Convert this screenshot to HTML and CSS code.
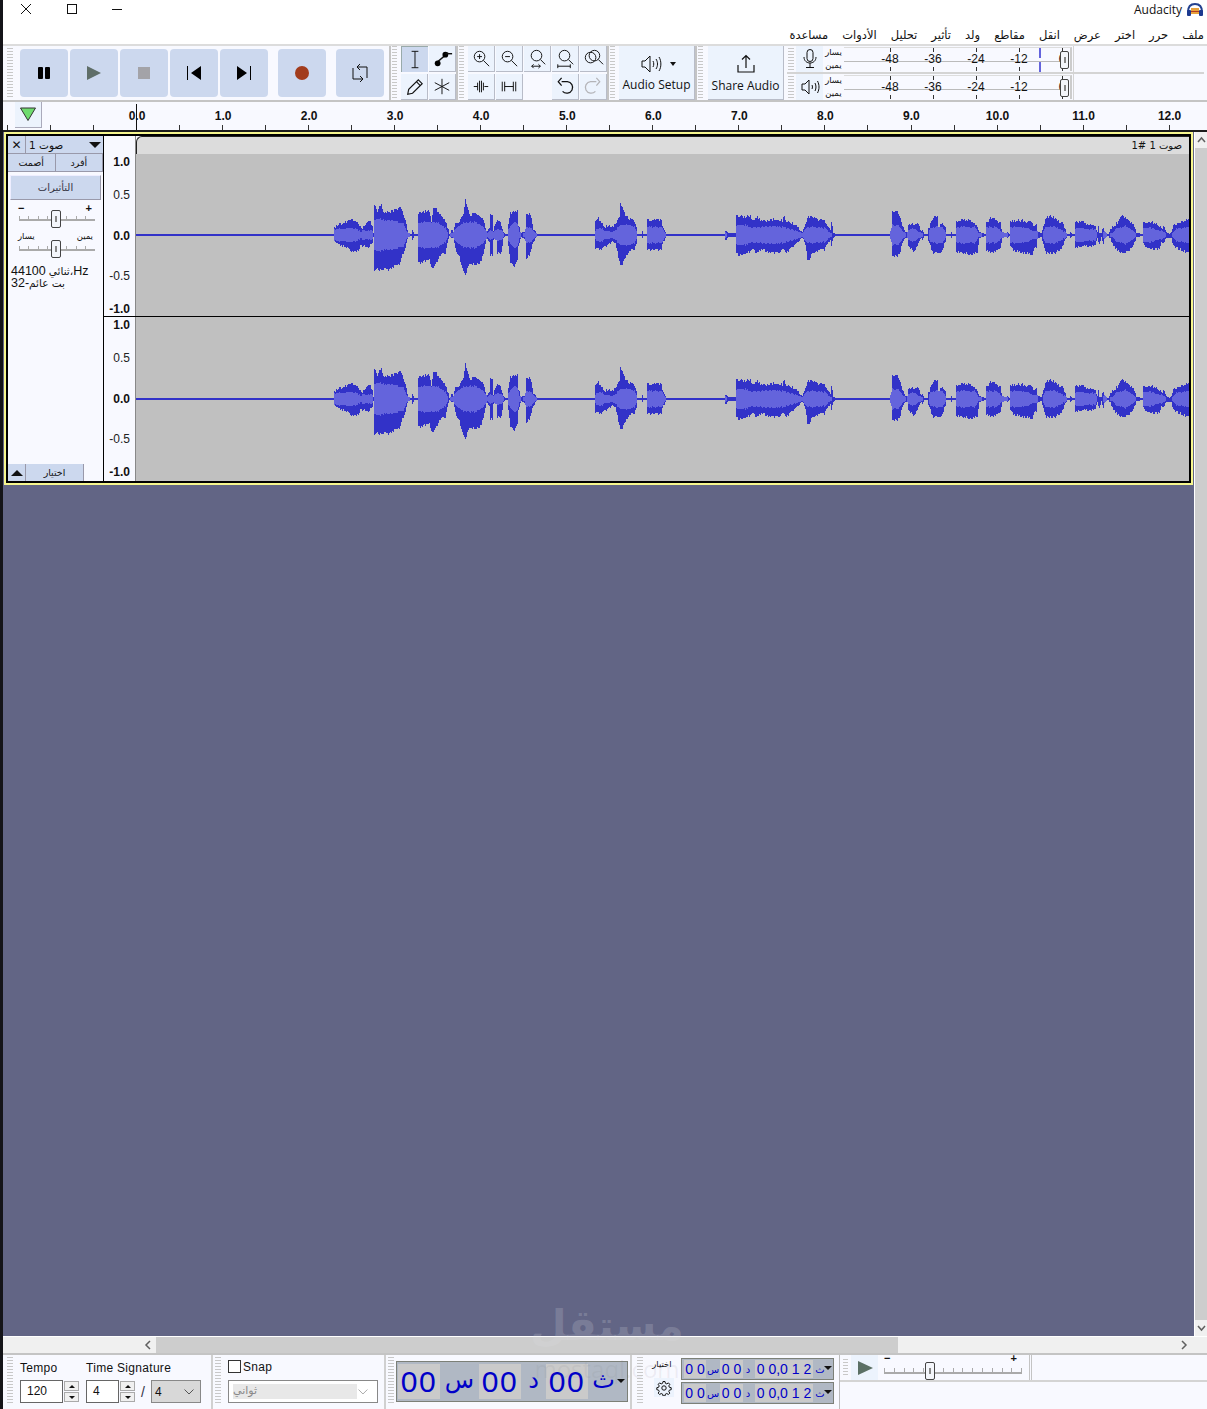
FILE: index.html
```html
<!DOCTYPE html>
<html lang="ar">
<head>
    <meta charset="UTF-8">
    <title>Audacity</title>
    <link rel="stylesheet" href="styles.css">
</head>
<body>
    <header class="titlebar">
        <div class="window-btns">
            <svg width="12" height="12" viewBox="0 0 12 12"><path d="M1 1l10 10M11 1L1 11" stroke="#111" fill="none"/></svg>
            <svg width="12" height="12" viewBox="0 0 12 12"><rect x="1.500" y="1.500" width="9" height="9" stroke="#111" fill="none"/></svg>
            <svg width="12" height="12" viewBox="0 0 12 12"><path d="M1 6.500h10" stroke="#111" fill="none"/></svg>
        </div>
        <div class="app-name">
            Audacity
            <svg width="16" height="14" viewBox="0 0 16 14">
                <path d="M1 9C1 3 4 1 8 1s7 2 7 8" stroke="#23418f" stroke-width="2" fill="none"/>
                <rect x="0" y="7" width="4" height="6" rx="1" fill="#1c3a90"/>
                <rect x="12" y="7" width="4" height="6" rx="1" fill="#1c3a90"/>
                <rect x="4" y="5" width="8" height="6" fill="#e8a23c"/>
                <path d="M4 8.500h8" stroke="#b03a20"/>
            </svg>
        </div>
    </header>
    <nav class="menubar">
        <span>ملف</span><span>حرر</span><span>اختر</span><span>عرض</span><span>انقل</span><span>مقاطع</span><span>ولد</span><span>تأثير</span><span>تحليل</span><span>الأدوات</span><span>مساعدة</span>
    </nav>

    <section class="toolbars">
        <div class="transport">
            <div class="grip"></div>
            <button class="tbtn">
                <svg viewBox="0 0 48 48"><rect x="18" y="18" width="5" height="12" rx="1"/><rect x="25" y="18" width="5" height="12" rx="1"/></svg>
            </button>
            <button class="tbtn">
                <svg viewBox="0 0 48 48"><path d="M17 17l14 7-14 7z" fill="#5f6e68"/></svg>
            </button>
            <button class="tbtn">
                <svg viewBox="0 0 48 48"><rect x="18" y="18" width="12" height="12" fill="#a3a3a8"/></svg>
            </button>
            <button class="tbtn">
                <svg viewBox="0 0 48 48"><path d="M17 17h1v14h-1zM31 17v14l-10-7z"/></svg>
            </button>
            <button class="tbtn">
                <svg viewBox="0 0 48 48"><path d="M17 17l10 7-10 7zM30 17h1v14h-1z"/></svg>
            </button>
            <button class="tbtn tbtn-gap">
                <svg viewBox="0 0 48 48"><circle cx="24" cy="24" r="7" fill="#a23c1c"/></svg>
            </button>
            <button class="tbtn tbtn-gap">
                <svg viewBox="0 0 48 48"><path d="M21 18h10v11M27 30H17V19" fill="none" stroke="#111"/><path d="M24 15l-3 3 3 3M24 27l3 3-3 3" fill="none" stroke="#111"/></svg>
            </button>
        </div>

        <div class="sep"></div>
        <div class="toolgrid tools">
            <button class="sbtn active"><svg viewBox="0 0 27 26"><path d="M10 4.500h7M10 21.500h7M13.500 4.500v17" stroke="#111" fill="none"/></svg></button>
            <button class="sbtn"><svg viewBox="0 0 27 26"><path d="M7 18L20 7" stroke="#111" stroke-width="1.500"/><circle cx="9" cy="18" r="3"/><circle cx="17" cy="9" r="3"/><path d="M17 8h7" stroke="#111" stroke-width="1.500"/></svg></button>
            <button class="sbtn"><svg viewBox="0 0 27 26"><path d="M7 21l1-5L18 6l4 4-10 10zM16 8l4 4" fill="none" stroke="#111" stroke-width="1.200"/></svg></button>
            <button class="sbtn"><svg viewBox="0 0 27 26"><path d="M13.500 5v16M6 9l15 8M21 9L6 17" stroke="#111" fill="none"/></svg></button>
        </div>

        <div class="sep"></div>
        <div class="toolgrid edit">
            <button class="sbtn"><svg viewBox="0 0 27 26"><circle cx="12" cy="11" r="5.500" class="ln"/><path d="M16 15l6 6M9.500 11h5M12 8.500v5" class="ln"/></svg></button>
            <button class="sbtn"><svg viewBox="0 0 27 26"><circle cx="12" cy="11" r="5.500" class="ln"/><path d="M16 15l6 6M9.500 11h5" class="ln"/></svg></button>
            <button class="sbtn"><svg viewBox="0 0 27 26"><circle cx="13" cy="10" r="5.500" class="ln"/><path d="M17 14l5 5M8 21h9M10 19l-2 2 2 2M15 19l2 2-2 2" class="ln"/></svg></button>
            <button class="sbtn"><svg viewBox="0 0 27 26"><circle cx="13" cy="10" r="5.500" class="ln"/><path d="M17 14l5 5M6 21h13M6 19v4M19 19v4" class="ln"/></svg></button>
            <button class="sbtn"><svg viewBox="0 0 27 26"><circle cx="11" cy="12" r="5.500" class="ln"/><circle cx="15" cy="10" r="5.500" class="ln"/><path d="M19 14l5 5" class="ln"/></svg></button>
            <button class="sbtn"><svg viewBox="0 0 27 26"><path d="M6 13h4M21 13h-4M10 9v8M12 7v12M14 7v12M16 9v8" class="ln"/></svg></button>
            <button class="sbtn"><svg viewBox="0 0 27 26"><path d="M9 13h9M6.500 8v10M9 8v10M18 8v10M20.500 8v10" class="ln"/></svg></button>
            <div class="sblank"></div>
            <button class="sbtn"><svg viewBox="0 0 27 26"><path d="M10 8h6a6 6 0 1 1-5 10M10 4L6.500 8 10 12" class="ln" stroke-width="1.300"/></svg></button>
            <button class="sbtn"><svg viewBox="0 0 27 26"><path d="M17 8h-6a6 6 0 1 0 5 10M17 4l3.500 4-3.500 4" class="ln dim" stroke-width="1.300"/></svg></button>
        </div>

        <div class="sep"></div>
        <button class="bigbtn setup">
            <span class="icon-row">
                <svg width="24" height="20" viewBox="0 0 24 20"><path d="M2 7h3l5-5v16l-5-5H2z" class="ln"/><path d="M13 7c1 2 1 4 0 6M16 5c2 3 2 7 0 10M19 3c2.500 4 2.500 10 0 14" class="ln"/></svg>
                <span class="caret"></span>
            </span>
            Audio Setup
        </button>
        <div class="sep"></div>
        <button class="bigbtn share">
            <svg width="20" height="20" viewBox="0 0 20 20"><path d="M10 14V2M6 5.500L10 1.500l4 4M2 11v7h16v-7" class="ln" stroke-width="1.200"/></svg>
            Share Audio
        </button>

        <div class="meters">
            <div class="meter-row">
                <div class="grip grip-short"></div>
                <button class="mbtn"><svg width="20" height="22" viewBox="0 0 20 22"><rect x="7" y="1.500" width="6" height="12" rx="3" class="ln"/><path d="M4 9c0 8 12 8 12 0M10 15v4M6 19.500h8" class="ln"/></svg></button>
                <div class="lr"><span>يسار</span><span>يمين</span></div>
                <div class="meter">
                    <span>-48</span><span>-36</span><span>-24</span><span>-12</span><span>0</span>
                    <i class="peak"></i><i class="peak peak-low"></i><i class="mthumb"></i>
                </div>
            </div>
            <div class="meter-row">
                <div class="grip grip-short"></div>
                <button class="mbtn"><svg width="20" height="20" viewBox="0 0 20 20"><path d="M2 7h3l4-4v14l-4-4H2z" class="ln"/><path d="M12 8c.6 1.300.6 2.700 0 4M15 6c1.300 2.500 1.300 5.500 0 8M17.500 4c2 4 2 8 0 12" class="ln"/></svg></button>
                <div class="lr"><span>يسار</span><span>يمين</span></div>
                <div class="meter">
                    <span>-48</span><span>-36</span><span>-24</span><span>-12</span><span>0</span>
                    <i class="mthumb"></i>
                </div>
            </div>
        </div>
    </section>

    <section class="ruler">
        <button class="pin"><svg width="18" height="16" viewBox="0 0 18 16"><path d="M1.500 2h15L9 14.500z" fill="#6fdc6f" stroke="#333"/></svg></button>
        <div class="ruler-labels">
            <span>0.0</span><span>1.0</span><span>2.0</span><span>3.0</span><span>4.0</span><span>5.0</span><span>6.0</span><span>7.0</span><span>8.0</span><span>9.0</span><span>10.0</span><span>11.0</span><span>12.0</span>
        </div>
        <i class="playhead"></i>
    </section>

    <main class="workspace">
        <div class="project">
            <div class="track-frame">
                <aside class="track-panel">
                    <div class="tp-head">
                        <button class="tp-close">✕</button>
                        <button class="tp-name"><span class="mix">صوت 1</span><i class="tri-down"></i></button>
                    </div>
                    <div class="tp-row">
                        <button>أصمت</button><button>أفرد</button>
                    </div>
                    <button class="tp-fx">التأثيرات</button>
                    <div class="tp-marks"><span>−</span><span>+</span></div>
                    <div class="slider tp-slider"><i></i></div>
                    <div class="tp-marks tp-marks-ar"><span>يسار</span><span>يمين</span></div>
                    <div class="slider tp-slider"><i></i></div>
                    <div class="tp-info">
                        <div class="tp-info-1"><span>44100</span><span class="ar">ثنائي،</span><span>Hz</span></div>
                        <div class="tp-info-2"><span>32-</span><span class="ar">بت عائم</span></div>
                    </div>
                    <div class="tp-foot">
                        <button class="tp-collapse"><i class="tri-up"></i></button>
                        <button class="tp-select">اختيار</button>
                    </div>
                </aside>
                <div class="channels">
                    <div class="clip-head">
                        <div class="clip-spacer"></div>
                        <div class="clip-title">صوت 1 #1</div>
                    </div>
                    <div class="channel channel-1">
                        <div class="vscale">
                            <b>1.0</b><span>0.5</span><b>0.0</b><span>-0.5</span><b>-1.0</b>
                        </div>
                        <canvas class="wave" width="1053" height="162" data-center="81"></canvas>
                    </div>
                    <div class="channel channel-2">
                        <div class="vscale">
                            <b>1.0</b><span>0.5</span><b>0.0</b><span>-0.5</span><b>-1.0</b>
                        </div>
                        <canvas class="wave" width="1053" height="164" data-center="82"></canvas>
                    </div>
                </div>
            </div>
        </div>
        <div class="vscroll">
            <svg width="13" height="16" viewBox="0 0 13 16"><path d="M3 10l3.500-4 3.500 4" fill="none" stroke="#606060" stroke-width="1.500"/></svg>
            <div class="vthumb"></div>
            <svg width="13" height="16" viewBox="0 0 13 16"><path d="M3 6l3.500 4L10 6" fill="none" stroke="#606060" stroke-width="1.500"/></svg>
        </div>
    </main>

    <div class="hscroll">
        <svg width="13" height="16" viewBox="0 0 13 16"><path d="M9 4L5 8l4 4" fill="none" stroke="#606060" stroke-width="1.500"/></svg>
        <div class="hthumb"></div>
        <svg width="13" height="16" viewBox="0 0 13 16"><path d="M5 4l4 4-4 4" fill="none" stroke="#606060" stroke-width="1.500"/></svg>
    </div>

    <footer class="bottom">
        <div class="bar bar-tempo">
            <div class="grip"></div>
            <div class="field">
                <label>Tempo</label>
                <div class="spin">
                    <div class="num num-tempo">120</div>
                    <div class="spin-btns"><button><i class="tri-up tiny"></i></button><button><i class="tri-down tiny"></i></button></div>
                </div>
            </div>
            <div class="field">
                <label>Time Signature</label>
                <div class="spin">
                    <div class="num num-sig">4</div>
                    <div class="spin-btns"><button><i class="tri-up tiny"></i></button><button><i class="tri-down tiny"></i></button></div>
                    <span class="slash">/</span>
                    <div class="select select-sig"><span>4</span><svg width="12" height="8" viewBox="0 0 12 8"><path d="M1.500 1.500L6 6l4.500-4.500" fill="none" stroke="#555"/></svg></div>
                </div>
            </div>
        </div>
        <div class="bar bar-snap">
            <div class="grip"></div>
            <div class="snap-col">
                <div class="snap-check"><i></i>Snap</div>
                <div class="select select-snap"><span>ثواني</span><svg width="12" height="8" viewBox="0 0 12 8"><path d="M1.500 1.500L6 6l4.500-4.500" fill="none" stroke="#aaa"/></svg></div>
            </div>
        </div>
        <div class="bar bar-time">
            <div class="grip"></div>
            <div class="time-big">
                <span class="cell c1">00</span><span class="unit u1">س</span><span class="cell c2">00</span><span class="unit u2">د</span><span class="cell c3">00</span><span class="unit u3">ث</span><i class="tri-down tiny"></i>
            </div>
        </div>
        <div class="bar bar-sel">
            <div class="grip"></div>
            <div class="sel-col">
                <span class="sel-label">اختيار</span>
                <button class="gear"><svg width="16" height="16" viewBox="0 0 16 16"><circle cx="8" cy="8" r="2.200" class="ln"/><path d="M7 1.500h2l.4 1.800 1.400.6 1.600-1 1.400 1.400-1 1.600.6 1.400 1.800.4v2l-1.800.4-.6 1.400 1 1.600-1.400 1.400-1.600-1-1.400.6-.4 1.800H7l-.4-1.800-1.400-.6-1.600 1-1.400-1.400 1-1.600-.6-1.400-1.800-.4v-2l1.800-.4.600-1.400-1-1.600 1.400-1.400 1.600 1 1.400-.6z" class="ln"/></svg></button>
            </div>
            <div class="sel-times">
                <div class="time-small">
                    <span class="cell sa">0 0</span><span class="unit sb">س</span><span class="cell sc">0 0</span><span class="unit sd">د</span><span class="cell se">0 0,0 1 2</span><span class="unit sf">ث</span><i class="tri-down tiny"></i>
                </div>
                <div class="time-small">
                    <span class="cell sa">0 0</span><span class="unit sb">س</span><span class="cell sc">0 0</span><span class="unit sd">د</span><span class="cell se">0 0,0 1 2</span><span class="unit sf">ث</span><i class="tri-down tiny"></i>
                </div>
            </div>
        </div>
        <div class="bar-speed">
            <div class="speed-row">
                <div class="grip grip-short"></div>
                <button class="speed-play"><svg width="20" height="20" viewBox="0 0 20 20"><path d="M3 3l15 7-15 7z" fill="#5b7065"/></svg></button>
                <div class="speed-slider">
                    <div class="tp-marks"><span>−</span><span>+</span></div>
                    <div class="slider"><i></i></div>
                </div>
                <div class="speed-end"></div>
            </div>
        </div>
    </footer>

    <div class="watermark">
        <div class="wm-big">مستقل</div>
        <div class="wm-small">mostaql.com</div>
    </div>
    <script src="script.js"></script>
</body>
</html>
```

FILE: styles.css
```css
:root {
    --panel: #f8f9ff;
    --btn: #ccd8ee;
    --btn-light: #ecf3fd;
    --line: #c4c4c4;
    --wave-bg: #c0c0c0;
    --project: #626585;
    --ar: "DejaVu Sans", sans-serif;
    --ui: "Liberation Sans", Arial, sans-serif;
}
* {
    box-sizing: border-box;
}
html, body {
    height: 100%;
}
body {
    margin: 0;
    width: 1207px;
    height: 1409px;
    overflow: hidden;
    position: relative;
    display: flex;
    flex-direction: column;
    border-left: 3px solid #141418;
    background-color: var(--project);
    font-family: var(--ui);
    font-size: 12px;
    color: #111;
}
button {
    padding: 0;
    border: none;
    font: inherit;
    color: inherit;
}
svg {
    display: block;
}
.ln {
    fill: none;
    stroke: #111;
}
.dim {
    stroke: #b4b4b8;
}

/* title + menu */
.titlebar {
    height: 25px;
    background-color: #fff;
    display: flex;
    justify-content: space-between;
    flex: none;
}
.window-btns {
    display: flex;
    gap: 33.500px;
    padding: 3px 0 0 17px;
}
.app-name {
    display: flex;
    gap: 5px;
    padding: 3px 4px 0 0;
    font-family: "Open Sans", sans-serif;
    line-height: 14px;
}
.menubar {
    height: 19px;
    flex: none;
    background-color: #fff;
    display: flex;
    direction: rtl;
    gap: 14px;
    padding-right: 3px;
    font-family: var(--ar);
    font-size: 11.500px;
    line-height: 20px;
}

/* top toolbars */
.toolbars {
    height: 58px;
    flex: none;
    display: flex;
    background-color: var(--panel);
    border-top: 2px solid #dcdcdc;
    border-bottom: 2px solid var(--line);
}
.grip {
    width: 6px;
    flex: none;
    background-image: repeating-linear-gradient(180deg, #c8c8c8 0 1px, transparent 1px 3px);
}
.transport {
    display: flex;
    align-items: center;
    gap: 2px;
    width: 384px;
    flex: none;
    margin-right: 2px;
    padding-left: 4px;
    height: 54px;
}
.transport .grip {
    height: 50px;
    margin-right: 5px;
}
.tbtn {
    width: 48px;
    height: 48px;
    flex: none;
    border-radius: 4px;
    background-color: var(--btn);
}
.tbtn-gap {
    margin-left: 8px;
}
.sep {
    width: 8px;
    flex: none;
    margin-right: 4px;
    border-left: 2px solid var(--line);
    background-image: repeating-linear-gradient(180deg, #c8c8c8 0 1px, transparent 1px 3px);
    background-size: 5px 100%;
    background-repeat: no-repeat;
    background-position: 1px 0;
}
.toolgrid {
    display: grid;
    flex: none;
    grid-template-columns: repeat(2, 27px);
    grid-template-rows: 26px 26px;
    gap: 2px 1px;
}
.edit {
    grid-template-columns: repeat(5, 27px);
}
.sbtn {
    background-color: var(--btn-light);
    border-right: 1px solid #b8bcc8;
    border-bottom: 1px solid #b8bcc8;
}
.sbtn.active {
    background-color: var(--btn);
    border: none;
    border-left: 1px solid #9aa;
    border-top: 1px solid #9aa;
}
.bigbtn {
    width: 76px;
    height: 54px;
    flex: none;
    display: flex;
    flex-direction: column;
    align-items: center;
    gap: 3px;
    padding-top: 8px;
    background-color: var(--btn-light);
    border-right: 1px solid #b8bcc8;
    border-bottom: 1px solid #b8bcc8;
    font-family: "Open Sans", sans-serif;
    font-size: 12px;
    line-height: 15px;
}
.share {
    margin-left: 1px;
    padding-top: 8px;
    gap: 4px;
}
.icon-row {
    display: flex;
    align-items: center;
    gap: 6px;
    padding-left: 2px;
}
.caret {
    width: 0;
    height: 0;
    border-left: 3px solid transparent;
    border-right: 3px solid transparent;
    border-top: 4px solid #111;
}
.meters {
    flex: 1;
    margin-left: 3px;
}
.meter-row {
    height: 28px;
    display: flex;
    align-items: center;
    width: 417px;
    border-bottom: 2px solid #d4d4d4;
    position: relative;
}
.meter-row:last-child {
    height: 26px;
    border-bottom: none;
}
.meter-row::after {
    content: "";
    width: 144px;
    position: absolute;
    left: 286px;
    top: 0;
    bottom: 0;
    border-left: 1px solid #d4d4d4;
}
.grip-short {
    height: 22px;
    margin: 0 2px 0 1px;
}
.mbtn {
    width: 27px;
    height: 26px;
    flex: none;
    display: flex;
    align-items: center;
    justify-content: center;
    background-color: var(--btn-light);
}
.lr {
    width: 21px;
    flex: none;
    display: flex;
    flex-direction: column;
    align-items: center;
    font-family: var(--ar);
    font-size: 8.500px;
    line-height: 13px;
}
.meter {
    width: 228px;
    height: 24px;
    flex: none;
    position: relative;
    display: flex;
    padding-left: 24.500px;
    background: linear-gradient(#bbb, #bbb) 0 13px / 222px 1px no-repeat;
    border-top: 1px solid #ddd;
    border-right: 2px solid #ccc;
}
.meter span {
    width: 43px;
    flex: none;
    text-align: center;
    font-size: 12px;
    line-height: 23px;
    position: relative;
}
.meter span::before,
.meter span::after {
    content: "";
    position: absolute;
    left: 21px;
    height: 4px;
    width: 1px;
    background-color: #333;
}
.meter span::before {
    top: 0;
}
.meter span::after {
    bottom: 0;
}
.peak {
    position: absolute;
    left: 195px;
    top: 0;
    width: 2px;
    height: 10px;
    background-color: #6464dc;
}
.peak-low {
    top: 14px;
}
.mthumb {
    position: absolute;
    left: 216px;
    top: 3px;
    width: 9px;
    height: 18px;
    border: 1px solid #444;
    border-radius: 2px;
    background: linear-gradient(#888, #888) center / 2px 6px no-repeat #f4f6fb;
}

/* time ruler */
.ruler {
    height: 28px;
    flex: none;
    display: flex;
    position: relative;
    overflow: hidden;
    padding-left: 12px;
    background-color: var(--panel);
    background-image: repeating-linear-gradient(90deg, #333 0 1px, transparent 1px 43.025px);
    background-size: 100% 5px;
    background-position: 4px 100%;
    background-repeat: no-repeat;
}
.pin {
    width: 27px;
    height: 26px;
    flex: none;
    display: flex;
    justify-content: center;
    padding-top: 4px;
    background-color: #ecf3fd;
    border-right: 1px solid #aab;
    border-bottom: 1px solid #aab;
}
.ruler-labels {
    display: flex;
    flex: none;
    margin-left: 52px;
}
.ruler-labels span {
    flex: none;
    width: 86.050px;
    text-align: center;
    font-weight: bold;
    font-size: 12px;
    line-height: 28px;
}
.playhead {
    position: absolute;
    left: 133px;
    top: 2px;
    bottom: 0;
    width: 1px;
    background-color: #111;
}

/* track */
.workspace {
    height: 1206px;
    flex: none;
    display: flex;
    border-top: 2px solid #1c1c1c;
}
.project {
    flex: 1;
    position: relative;
    padding: 0 1px;
}
.track-frame {
    height: 353px;
    display: flex;
    background-color: #000;
    border: 2px solid #f6f68e;
    padding: 2px;
}
.track-panel {
    width: 96px;
    flex: none;
    display: flex;
    flex-direction: column;
    background-color: var(--panel);
    border-right: 1px solid #000;
    font-family: var(--ar);
}
.tp-head {
    display: flex;
    height: 18px;
    border-bottom: 1px solid #99a;
}
.tp-close {
    width: 18px;
    background-color: var(--btn);
    font-size: 12px;
    border-right: 1px solid #99a;
}
.tp-name {
    flex: 1;
    display: flex;
    justify-content: space-between;
    align-items: center;
    padding: 0 2px 0 3px;
    background-color: var(--btn);
    font-family: var(--ar);
    font-size: 10.500px;
}
.tri-down,
.tri-up {
    width: 0;
    height: 0;
    display: block;
    border-left: 6px solid transparent;
    border-right: 6px solid transparent;
}
.tri-down {
    border-top: 6px solid #111;
}
.tri-up {
    border-bottom: 6px solid #111;
}
.tiny {
    border-left-width: 3px;
    border-right-width: 3px;
    border-top-width: 3px;
    border-bottom-width: 3px;
}
.tp-row {
    display: flex;
    height: 18px;
}
.tp-row button {
    flex: 1;
    background-color: var(--btn);
    font-size: 9.500px;
    border-right: 1px solid #99a;
    border-bottom: 1px solid #99a;
}
.tp-fx {
    margin: 3px 2px 0;
    height: 25px;
    flex: none;
    background-color: var(--btn);
    font-size: 10px;
    color: #334;
    border-right: 1px solid #99a;
    border-bottom: 1px solid #99a;
    border-top: 1px solid #eef;
    border-left: 1px solid #eef;
}
.tp-marks {
    display: flex;
    justify-content: space-between;
    height: 8px;
    margin: 2px 11px 0 10px;
    font-family: var(--ui);
    font-size: 11px;
    line-height: 12px;
    font-weight: bold;
}
.tp-marks-ar {
    margin: 4px 10px 0 10px;
    font-family: var(--ar);
    font-size: 8.500px;
    line-height: 8px;
    font-weight: normal;
}
.slider {
    height: 18px;
    flex: none;
    position: relative;
    background:
        linear-gradient(#aaa, #aaa) 0 9px / 100% 2px no-repeat,
        repeating-linear-gradient(90deg, #aaa 0 1px, transparent 1px 9.500px) 0 6px / 100% 3px no-repeat;
}
.slider i {
    position: absolute;
    left: 50%;
    top: 0;
    margin-left: -5px;
    width: 10px;
    height: 18px;
    border: 1px solid #444;
    border-radius: 2px;
    background: linear-gradient(#888, #888) center / 2px 6px no-repeat #f4f6fb;
}
.tp-slider {
    width: 76px;
    margin: 0 0 0 11px;
}
.tp-slider i {
    margin-left: -6px;
}
.tp-info {
    margin: 7px 0 0 3px;
    font-family: var(--ui);
    font-size: 12.500px;
    line-height: 12px;
}
.tp-info .ar {
    font-family: var(--ar);
    font-size: 10.500px;
}
.tp-info-1 {
    display: flex;
    gap: 3px;
}
.tp-info-1 span:last-child {
    margin-left: -3px;
}
.tp-info-2 {
    display: flex;
}
.tp-foot {
    margin-top: auto;
    display: flex;
    height: 17px;
    margin-bottom: 0;
}
.tp-collapse {
    width: 18px;
    display: flex;
    align-items: center;
    justify-content: center;
    background-color: var(--btn);
    border-right: 1px solid #99a;
}
.tp-select {
    width: 58px;
    background-color: var(--btn);
    font-size: 9.500px;
    border-right: 1px solid #99a;
}
.channels {
    flex: 1;
    display: flex;
    flex-direction: column;
    min-width: 0;
}
.clip-head {
    height: 18px;
    display: flex;
    background-color: var(--panel);
    flex: none;
}
.clip-spacer {
    width: 32px;
    flex: none;
    border-right: 1px solid #888;
}
.clip-title {
    flex: 1;
    text-align: right;
    padding-right: 7px;
    background-color: #dcdcdc;
    border-top: 1px solid #222;
    border-left: 1px solid #222;
    border-top-left-radius: 6px;
    font-family: var(--ar);
    font-size: 10px;
    line-height: 17px;
}
.channel {
    display: flex;
    height: 163px;
    flex: none;
    border-bottom: 1px solid #000;
}
.channel-2 {
    height: 164px;
    border-bottom: none;
}
.vscale {
    width: 32px;
    flex: none;
    display: grid;
    grid-template-rows: 33px 41px 40px 33px 14px;
    justify-items: end;
    padding: 1px 5px 0 0;
    background-color: var(--panel);
    border-right: 1px solid #888;
    line-height: 14px;
    font-size: 12px;
    color: #222;
}
.vscale b {
    color: #111;
}
.wave {
    width: 1053px;
    flex: none;
    display: block;
    background-color: var(--wave-bg);
}
.watermark {
    position: absolute;
    left: 484px;
    top: 1296px;
    width: 240px;
    text-align: center;
}
.wm-big {
    font-family: var(--ar);
    font-size: 42px;
    font-weight: bold;
    line-height: 60px;
    color: rgba(225, 225, 230, 0.2);
}
.wm-small {
    font-family: "Open Sans", sans-serif;
    font-size: 24px;
    line-height: 26px;
    color: rgba(120, 120, 130, 0.1);
}

/* scrollbars */
.vscroll {
    width: 13px;
    flex: none;
    display: flex;
    flex-direction: column;
    background-color: #f0f0f0;
    border-left: 1px solid #fff;
}
.vthumb {
    flex: 1;
    background-color: #cdcdcd;
}
.hscroll {
    height: 17px;
    flex: none;
    display: flex;
    align-items: center;
    padding-left: 138px;
    padding-right: 8px;
    background-color: #f0f0f0;
    border-top: 1px solid #fff;
}
.hthumb {
    width: 742px;
    height: 16px;
    margin: 0 279px 0 2px;
    background-color: #cdcdcd;
}

/* bottom bars */
.bottom {
    flex: 1;
    min-height: 0;
    display: flex;
    background-color: var(--panel);
    border-top: 2px solid var(--line);
}
.bar {
    display: flex;
    flex: none;
    align-items: stretch;
    border-right: 2px solid #d0d0d0;
}
.bar .grip {
    margin: 2px 0;
    height: 48px;
}
.bar-tempo {
    width: 210px;
    padding-left: 4px;
    gap: 7px;
}
.field {
    display: flex;
    flex-direction: column;
    padding-top: 5px;
}
.field label {
    height: 20px;
    letter-spacing: 0.300px;
    line-height: 16px;
}
.spin {
    display: flex;
    align-items: center;
    gap: 1px;
}
.num {
    height: 23px;
    border: 1px solid #666;
    background-color: #fff;
    padding-left: 6px;
    line-height: 20px;
    font-size: 12px;
}
.num-tempo {
    width: 43px;
}
.num-sig {
    width: 33px;
}
.spin-btns {
    width: 15px;
    display: flex;
    flex-direction: column;
    gap: 1px;
}
.spin-btns button {
    height: 10px;
    display: flex;
    align-items: center;
    justify-content: center;
    background-color: #f0f0f0;
    border: 1px solid #aaa;
}
.slash {
    width: 14px;
    text-align: center;
    font-size: 14px;
    color: #334;
}
.select {
    display: flex;
    align-items: center;
    justify-content: space-between;
    height: 23px;
    border: 1px solid #888;
}
.select-sig {
    width: 50px;
    padding: 0 5px 0 3px;
    background-color: #d8d8d8;
}
.bar-snap {
    width: 173px;
    padding-left: 2px;
    gap: 7px;
}
.snap-col {
    display: flex;
    flex-direction: column;
    gap: 6px;
    padding-top: 4px;
}
.snap-check {
    display: flex;
    align-items: center;
    gap: 2px;
    height: 15px;
    letter-spacing: 0.300px;
}
.snap-check i {
    width: 13px;
    height: 13px;
    border: 1px solid #333;
    background-color: #fff;
}
.select-snap {
    width: 150px;
    padding: 0 8px 0 4px;
    background-color: #fff;
    font-family: var(--ar);
    font-size: 11px;
    color: #888;
}
.select-snap span {
    width: 125px;
    height: 15px;
    line-height: 14px;
    background-color: #e8e8e8;
}
.bar-time {
    width: 246px;
    padding-left: 2px;
    gap: 2px;
}
.time-big {
    width: 232px;
    height: 41px;
    margin-top: 6px;
    display: flex;
    align-items: stretch;
    padding: 2px 0;
    background-color: #b0b8c4;
    border: 1px solid #7c8078;
    color: #0000c8;
    position: relative;
}
.time-big .cell {
    background-color: #cacaca;
    font-size: 30px;
    line-height: 35px;
    letter-spacing: 1.500px;
    text-align: center;
}
.time-big .unit {
    font-family: var(--ar);
    font-size: 24px;
    line-height: 33px;
    text-align: center;
}
.c1, .c2, .c3 {
    width: 42px;
}
.c1 {
    margin-left: 1px;
}
.u1 {
    width: 39px;
}
.u2 {
    width: 25px;
}
.u3 {
    width: 31px;
}
.time-big .tri-down {
    position: absolute;
    right: 2px;
    top: 17px;
    border-left-width: 4px;
    border-right-width: 4px;
    border-top-width: 4px;
}
.bar-sel {
    width: 208px;
    padding-left: 5px;
    gap: 6px;
    border-right: 1px solid #bbb;
}
.sel-col {
    width: 26px;
    flex: none;
    display: flex;
    flex-direction: column;
    align-items: center;
    padding-top: 2px;
    gap: 7px;
}
.sel-label {
    font-family: var(--ar);
    font-size: 8.500px;
    line-height: 14px;
}
.gear {
    width: 20px;
    height: 19px;
    flex: none;
    margin-left: 4px;
    display: flex;
    align-items: center;
    justify-content: center;
    background-color: var(--btn-light);
}
.sel-times {
    display: flex;
    flex-direction: column;
    gap: 2px;
    padding-top: 3px;
}
.time-small {
    width: 153px;
    height: 22px;
    display: flex;
    padding: 1px 0 1px 2px;
    background-color: #b0b8c4;
    border: 1px solid #7c8078;
    color: #0000c8;
    font-size: 14px;
    line-height: 19px;
    position: relative;
}
.time-small .cell {
    flex: none;
    background-color: #cacaca;
    text-align: center;
    white-space: nowrap;
}
.time-small .unit {
    flex: none;
    font-family: var(--ar);
    font-size: 10px;
    text-align: center;
}
.sa {
    width: 22px;
}
.sb {
    width: 14px;
}
.sc {
    width: 23px;
}
.sd {
    width: 10px;
}
.se {
    width: 58px;
    margin-left: 2px;
}
.sf {
    width: 14px;
}
.time-small .tri-down {
    position: absolute;
    right: 1px;
    top: 7px;
    border-left-width: 4px;
    border-right-width: 4px;
    border-top-width: 4px;
}
.bar-speed {
    flex: 1;
}
.speed-row {
    height: 27px;
    display: flex;
    align-items: center;
    border-bottom: 2px solid #d4d4d4;
}
.speed-row .grip {
    margin: 0 3px 0 3px;
    height: 18px;
    width: 5px;
}
.speed-play {
    width: 27px;
    height: 25px;
    flex: none;
    display: flex;
    align-items: center;
    justify-content: center;
    background-color: var(--btn-light);
}
.speed-slider {
    width: 138px;
    flex: none;
    margin: 0 7px 0 6px;
}
.speed-slider .tp-marks {
    margin: 0 5px 0 0;
    height: 5px;
    line-height: 5px;
}
.speed-slider .slider {
    margin-top: 1px;
    background:
        linear-gradient(#aaa, #aaa) 0 10px / 100% 2px no-repeat,
        repeating-linear-gradient(90deg, #aaa 0 1px, transparent 1px 9.800px) 0 6px / 100% 4px no-repeat;
}
.speed-slider .slider i {
    left: 33.500%;
}
.speed-end {
    width: 3px;
    height: 25px;
    flex: none;
    border-left: 1px solid #c4c4c4;
    border-right: 1px solid #c4c4c4;
}
```

FILE: script.js
```js
// envelope of the clip: [page x, peak above, peak below]
var peaks = [
    [333,1,1],[334,8,6],[337,10,9],[345,13,12],[351,15,16],[355,15,17],[358,12,15],[361,7,10],[364,8,11],[368,15,12],[372,10,8],[373,2,2],
    [374,31,36],[377,24,33],[381,31,36],[383,24,34],[388,22,35],[392,24,33],[400,28,28],[402,24,20],[405,14,14],[407,5,4],[408,2,2],[411,1,1],[412,4,4],[414,1,1],[417,1,1],
    [418,22,28],[423,23,26],[429,24,25],[431,14,31],[433,26,32],[436,26,28],[440,20,20],[445,14,18],[447,8,8],[449,1,1],[450,1,1],[451,6,3],[453,3,2],[455,11,14],
    [459,14,22],[463,22,37],[465,37,40],[467,27,34],[470,20,28],[475,22,30],[481,18,26],[484,12,14],[486,4,4],[489,6,6],[490,20,20],[492,20,20],[493,5,5],[494,8,4],
    [496,12,5],[497,16,18],[499,14,18],[501,10,18],[503,3,3],[505,1,1],[507,1,1],[508,10,10],[510,22,27],[514,24,32],[517,24,26],[518,10,10],[521,2,2],[523,3,3],[525,5,5],
    [526,20,23],[529,21,20],[531,17,15],[533,6,6],[537,1,1],
    [594,1,1],[595,14,14],[598,17,14],[602,12,14],[604,8,10],[607,9,11],[612,8,6],[615,10,8],[619,18,26],[620,31,31],[622,28,30],[625,20,22],[628,17,18],[632,16,14],[634,14,14],[636,8,10],[637,1,1],
    [641,1,1],[642,5,3],[643,1,1],[646,1,1],[647,15,15],[658,15,15],[661,15,15],[662,8,8],[666,1,1],
    [724,1,1],[725,4,4],[726,5,5],[728,2,2],[735,2,2],[736,19,18],[738,19,20],[744,18,20],[750,19,16],[752,14,14],[756,18,17],[762,14,14],[770,15,18],[778,16,18],[782,14,14],[784,20,16],[785,14,18],
    [790,12,14],[795,11,10],[798,7,7],[800,4,4],[802,3,3],[805,10,10],[807,18,24],[809,18,26],[812,18,18],[820,15,15],[824,14,15],[827,9,9],[830,6,6],[831,13,11],[833,2,3],[835,1,1],
    [889,1,1],[890,4,4],[891,2,2],[892,23,21],[897,23,21],[899,20,20],[902,8,8],[905,3,3],[907,2,2],[908,10,12],[910,10,14],[914,11,16],[917,12,10],[920,5,5],[923,3,3],[924,1,1],
    [927,1,1],[928,6,6],[931,14,14],[933,18,18],[937,20,18],[938,7,18],[941,12,18],[945,8,6],[946,1,1],[950,1,1],[951,3,3],[952,1,1],[955,1,1],[956,13,17],[960,15,18],[965,15,18],[970,14,20],[974,13,18],[977,9,19],[979,3,3],
    [985,1,1],[986,12,16],[990,17,17],[992,17,18],[996,14,16],[1000,12,14],[1002,3,3],[1006,1,1],[1007,3,3],[1009,1,1],[1010,14,12],[1015,14,16],[1022,15,18],[1027,12,18],[1030,14,20],[1032,12,20],[1034,8,12],[1036,12,14],[1037,3,3],
    [1041,2,2],[1043,10,10],[1046,18,18],[1050,19,18],[1055,16,18],[1062,12,12],[1064,8,6],[1067,1,1],[1069,1,1],[1070,3,3],[1072,1,1],[1074,1,1],[1075,13,12],[1082,13,11],[1088,10,11],[1095,10,11],[1097,3,3],[1098,8,8],[1099,2,9],[1101,2,2],[1103,8,8],[1104,1,1],
    [1108,1,1],[1112,8,8],[1117,12,16],[1122,20,17],[1127,16,17],[1133,10,10],[1136,2,2],[1142,1,1],[1143,13,9],[1146,13,13],[1150,13,13],[1156,12,14],[1159,8,14],[1161,8,8],[1164,7,7],[1166,3,3],[1169,1,3],[1171,3,3],[1173,10,10],[1178,12,14],[1183,14,16],[1189,16,18]
];

// rms part, same above and below
var rms = [
    [333,1],[334,5],[345,7],[355,6],[360,4],[366,5],[372,4],[373,1],[374,15],[380,16],[385,15],[395,14],[403,11],[407,3],[410,1],[417,1],[418,13],[428,13],[438,12],[445,7],[448,1],[452,2],[456,7],[463,13],[475,13],[483,8],[487,2],[490,6],[493,3],[497,6],[501,5],[504,1],[507,1],[508,6],[512,12],[517,12],[519,4],[521,1],[524,2],[526,8],[530,8],[534,3],[537,1],
    [594,1],[596,6],[600,7],[605,4],[608,5],[612,3],[616,6],[620,10],[628,10],[634,8],[637,1],[646,1],[647,8],[661,8],[666,1],
    [724,1],[725,3],[727,1],[735,1],[736,9],[745,10],[752,7],[760,8],[770,9],[782,8],[790,6],[798,3],[802,2],[807,8],[815,8],[825,7],[829,3],[832,1],
    [889,1],[892,10],[898,10],[902,4],[906,1],[908,6],[914,6],[918,4],[923,1],[928,1],[930,7],[937,9],[942,8],[945,3],[946,1],[955,1],[956,8],[975,8],[978,2],[985,1],[986,8],[996,8],[1001,3],[1009,1],[1010,8],[1020,8],[1028,7],[1033,4],[1037,4],[1038,1],[1042,1],[1045,8],[1055,8],[1063,4],[1067,1],[1074,1],[1075,7],[1088,6],[1095,6],[1097,1],[1102,1],[1104,4],[1107,1],[1112,2],[1116,7],[1125,9],[1132,5],[1136,1],[1142,1],[1143,7],[1152,7],[1156,5],[1162,4],[1166,1],[1171,1],[1175,6],[1189,8]
];

function sample(list, x, col) {
    for (var i = 1; i < list.length; i++) {
        if (x <= list[i][0]) {
            var a = list[i - 1], b = list[i];
            if (x < a[0]) return 1;
            // long flat gaps between phrases are silence
            if (b[0] - a[0] > 30) return 1;
            return a[col] + (b[col] - a[col]) * (x - a[0]) / (b[0] - a[0]);
        }
    }
    return 1;
}

function jitter(x, seed) {
    var n = Math.sin(x * 12.9898 + seed) * 43758.5453;
    return n - Math.floor(n) - 0.5;
}

document.querySelectorAll('.wave').forEach(function (canvas) {
    var ctx = canvas.getContext('2d');
    var mid = Number(canvas.dataset.center);
    for (var i = 0; i < canvas.width; i++) {
        var x = i + 136;
        var up = sample(peaks, x, 1), down = sample(peaks, x, 2), r = sample(rms, x, 1);
        if (up > 3) up += jitter(x, 1) * 3;
        if (down > 3) down += jitter(x, 2) * 3;
        if (r > 3) r += jitter(x, 3) * 1.5;
        up = Math.max(1, Math.round(up));
        down = Math.max(1, Math.round(down));
        r = Math.round(r);
        ctx.fillStyle = '#3232c8';
        ctx.fillRect(i, mid - up, 1, up + down);
        if (r > 1) {
            ctx.fillStyle = '#6464dc';
            ctx.fillRect(i, mid - r, 1, r * 2);
        }
    }
});
```
